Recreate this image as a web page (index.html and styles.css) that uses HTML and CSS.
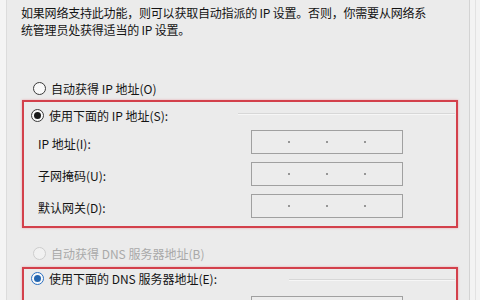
FILE: index.html
```
<!DOCTYPE html>
<html lang="zh-CN">
<head>
<meta charset="UTF-8">
<title>Internet 协议版本 4 (TCP/IPv4) 属性</title>
<link rel="stylesheet" href="styles.css">
</head>
<body>
  <div class="window">
    <div class="edge-left"></div>

    <main class="panel">
      <p class="desc">如果网络支持此功能，则可以获取自动指派的 IP 设置。否则，你需要从网络系<br>统管理员处获得适当的 IP 设置。</p>

      <div class="opt first"><span class="radio"></span>自动获得 IP 地址(O)</div>

      <section class="group ip">
        <div class="opt head"><span class="radio on"></span>使用下面的 IP 地址(S):<span class="rule"></span></div>
        <div class="field"><label>IP 地址(I):</label><span class="ipbox"><i></i><b></b><i></i><b></b><i></i><b></b><i></i></span></div>
        <div class="field"><label>子网掩码(U):</label><span class="ipbox"><i></i><b></b><i></i><b></b><i></i><b></b><i></i></span></div>
        <div class="field"><label>默认网关(D):</label><span class="ipbox"><i></i><b></b><i></i><b></b><i></i><b></b><i></i></span></div>
      </section>

      <div class="opt disabled"><span class="radio"></span>自动获得 DNS 服务器地址(B)</div>

      <section class="group dns">
        <div class="opt head"><span class="radio on blue"></span>使用下面的 DNS 服务器地址(E):<span class="rule"></span></div>
        <div class="field"><label></label><span class="ipbox"><i></i><b></b><i></i><b></b><i></i><b></b><i></i></span></div>
      </section>
    </main>

    <div class="edge-right"></div>
  </div>
</body>
</html>
```

FILE: styles.css
```
html, body { margin: 0; height: 100%; }
body { background: #ebebeb; color: #141414; font-family: "Noto Sans CJK SC", "Noto Sans", sans-serif; font-size: 12px; overflow: hidden; }

.window { display: flex; height: 300px; overflow: hidden; }
.edge-left { width: 6px; background: #f4f4f4; border-right: 1px solid #dcdcdc; }
.edge-right { width: 10px; background: #f3f3f3; border-left: 1px solid #d3d3d3; box-shadow: inset -4px 0 0 #f3f3f3, inset -5px 0 0 #e2e2e2; }

.panel { flex: 1; padding: 4px 11px 0 14px; overflow: hidden; }
.desc { margin: 0; line-height: 17px; white-space: nowrap; letter-spacing: -0.2px; }

/* radio rows */
.opt { display: flex; align-items: center; height: 22px; padding-left: 12px; white-space: nowrap; }
.opt.first { margin-top: 39px; }
.opt.disabled { margin-top: 14px; color: #a9a9a9; }

.radio { box-sizing: border-box; width: 13px; height: 13px; margin-right: 5px; border: 1px solid #3a3a3a; border-radius: 50%; background: #f9f9f9; position: relative; flex: none; }
.radio.on::after { content: ""; position: absolute; left: 2px; top: 2px; width: 7px; height: 7px; border-radius: 50%; background: #1a1a1a; }
.radio.blue { border-color: #2a6fc0; }
.radio.blue::after { background: #2466b0; }
.disabled .radio { border-color: #cdcdcd; background: #f1f1f1; }

/* annotated groups */
.group { margin-left: 1px; border: 2px solid #d3404b; box-shadow: 0 0 2px rgba(230, 110, 120, 0.6); }
.group.ip { margin-top: 1px; padding: 2px 0 8px; }
.group.dns { margin-top: 3px; padding: 0; }
.group .head { padding-left: 7px; }
.group.ip .head { height: 22px; }
.group.dns .head { height: 18px; }

.rule { flex: 1; height: 0; margin: -2px 1px 0 70px; border-top: 1px solid #d7d7d7; border-bottom: 1px solid #f6f6f6; }
.group.dns .rule { margin: 4px 1px 0 72px; }

.field { display: flex; align-items: center; height: 24px; margin-top: 8px; padding-left: 14px; }
.group.ip .head + .field { margin-top: 4px; }
.group.dns .field { margin-top: 9px; }
.field label { width: 213px; padding-top: 2px; }

.ipbox { box-sizing: border-box; display: flex; align-items: center; width: 152px; height: 24px; border: 1px solid #a0a0a0; background: #ececec; }
.ipbox i { flex: 1; }
.ipbox b { width: 2px; height: 2px; background: #7a7a7a; border-radius: 50%; }
```
